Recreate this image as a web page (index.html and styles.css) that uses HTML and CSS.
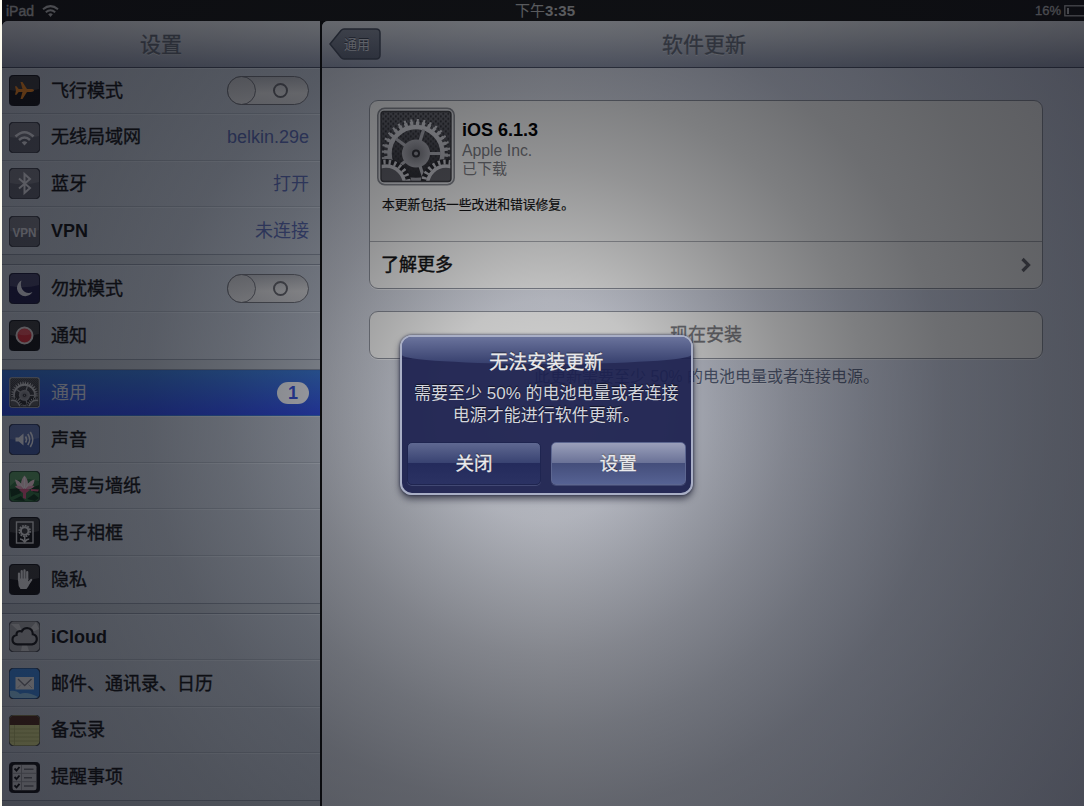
FILE: index.html
```
<!DOCTYPE html>
<html lang="zh-CN">
<head>
<meta charset="utf-8">
<title>设置</title>
<link rel="stylesheet" href="styles.css">
</head>
<body>
<svg class="defs" width="0" height="0">
  <defs>
    <linearGradient id="steel" x1="0" y1="0" x2="0" y2="1"><stop offset="0" stop-color="#d2d2d6"/><stop offset="1" stop-color="#96969c"/></linearGradient>
    <linearGradient id="plate" x1="0" y1="0" x2="0" y2="1"><stop offset="0" stop-color="#66666c"/><stop offset=".5" stop-color="#46464c"/><stop offset="1" stop-color="#28282c"/></linearGradient>
    <radialGradient id="hub"><stop offset="0" stop-color="#707076"/><stop offset="1" stop-color="#a2a2a8"/></radialGradient>
    <pattern id="mesh" width="5" height="5" patternUnits="userSpaceOnUse"><circle cx="1.3" cy="1.3" r="1.1" fill="#2a2a2e"/><circle cx="3.8" cy="3.8" r="1.1" fill="#2a2a2e"/></pattern>
    <clipPath id="gearclip"><rect x="4" y="4" width="70" height="70" rx="3"/></clipPath>
    <symbol id="gears" viewBox="0 0 78 78">
      <rect x=".8" y=".8" width="76.4" height="76.4" rx="7" fill="#d9dadc" stroke="#85878d" stroke-width="1.6"/>
      <rect x="4" y="4" width="70" height="70" rx="3" fill="url(#plate)"/>
      <rect x="4" y="4" width="70" height="70" rx="3" fill="url(#mesh)"/>
      <g clip-path="url(#gearclip)">
        <g fill="none" stroke="#a9a9af">
          <circle cx="39" cy="46" r="26.500" stroke-width="4.500" stroke="url(#steel)"/>
          <circle cx="39" cy="46" r="30" stroke-width="4" pathLength="320" stroke-dasharray="5.600 4.400" stroke="url(#steel)"/>
          <circle cx="39" cy="46" r="33" stroke-width="3" pathLength="320" stroke-dasharray="3.2 6.8" stroke-dashoffset="-1.2" stroke="url(#steel)"/>
          <path d="M39 46H64M39 46l7.700-24M39 46l-20-14.700M39 46l7.700 24M39 46l-20 14.700" stroke-width="3.200"/>
        </g>
        <circle cx="39" cy="46" r="14" fill="url(#hub)"/>
        <circle cx="39" cy="46" r="4" fill="#2b2b30"/><circle cx="39" cy="46" r="2" fill="#8f8f96"/>
        <g fill="none" stroke="#c2c2c7">
          <circle cx="9" cy="77" r="24" fill="#242428" stroke="#242428" stroke-width="3"/>
          <circle cx="9" cy="77" r="18.500" fill="#5c5c62" stroke-width="3.500"/>
          <circle cx="9" cy="77" r="22.500" stroke-width="5" pathLength="240" stroke-dasharray="4 5.230"/>
          <circle cx="69" cy="77" r="24" fill="#242428" stroke="#242428" stroke-width="3"/>
          <circle cx="69" cy="77" r="18.500" fill="#5c5c62" stroke-width="3.500"/>
          <circle cx="69" cy="77" r="22.500" stroke-width="5" pathLength="240" stroke-dasharray="4 5.230"/>
        </g>
      </g>
      <rect x="4" y="4" width="70" height="70" rx="3" fill="none" stroke="#3a3a3e" stroke-width="1.400"/>
    </symbol>
  </defs>
</svg>
<div class="device">
  <div class="status">
    <div class="carrier"><span>iPad</span>
      <svg width="17" height="12" viewBox="0 0 17 12" fill="none" stroke="#c6c6c6" stroke-width="2"><path d="M1 4.200Q8.500-2 16 4.200M3.800 7.300Q8.500 3.300 13.200 7.300"/><path d="M6.200 9.300Q8.500 7.300 10.800 9.300L8.500 12z" fill="#c6c6c6" stroke="none"/></svg>
    </div>
    <div class="clock"><span class="cjk">下午</span>3:35</div>
    <div class="power"><span>16%</span><svg width="20" height="12" viewBox="0 0 20 12"><rect x=".8" y=".8" width="24" height="10" fill="none" stroke="#c0c0c0" stroke-width="1.300"/><rect x="3" y="3" width="2" height="6" fill="#c0c0c0"/></svg></div>
  </div>
  <div class="split">
    <nav class="sidebar">
      <header class="bar"><h1>设置</h1></header>
      <ul class="group">
        <li class="row"><svg class="ico" viewBox="0 0 31 31"><rect class="tile black" width="31" height="31" rx="5"/><path class="gloss" d="M1 5q0-4 4-4h21q4 0 4 4v9q-14 4-29 1z"/><path fill="#f58a22" d="M25 15.500c0-.9-1.500-1.400-3-1.400h-4L13.500 7h-2l2 7.100H9.700L7.500 11.300H6l1 4.200-1 4.200h1.500l2.200-2.800h3.800l-2 7.100h2l4.500-7.100h4c1.500 0 3-.5 3-1.400z"/></svg><span class="label">飞行模式</span><span class="switch"><i class="knob"></i><i class="ring"></i></span></li>
        <li class="row"><svg class="ico" viewBox="0 0 31 31"><rect class="tile gray" width="31" height="31" rx="5"/><path class="gloss" d="M1 5q0-4 4-4h21q4 0 4 4v9q-14 4-29 1z"/><g fill="none" stroke="#e6e6ec" stroke-width="2.600"><path d="M6.500 14.500Q15.500 6 24.500 14.500M10 18Q15.500 13 21 18"/></g><path fill="#e6e6ec" d="M12.700 20.500q2.800-2.300 5.600 0l-2.800 3z"/></svg><span class="label">无线局域网</span><span class="value latin">belkin.29e</span></li>
        <li class="row"><svg class="ico" viewBox="0 0 31 31"><rect class="tile gray" width="31" height="31" rx="5"/><path class="gloss" d="M1 5q0-4 4-4h21q4 0 4 4v9q-14 4-29 1z"/><path fill="none" stroke="#e6e6ec" stroke-width="2" d="M10 10.500l11 9.500-5.500 5V6L21 11l-11 9.500"/></svg><span class="label">蓝牙</span><span class="value">打开</span></li>
        <li class="row"><svg class="ico" viewBox="0 0 31 31"><rect class="tile gray" width="31" height="31" rx="5"/><path class="gloss" d="M1 5q0-4 4-4h21q4 0 4 4v9q-14 4-29 1z"/><text x="15.500" y="20.800" class="vpn" textLength="24" lengthAdjust="spacingAndGlyphs">VPN</text></svg><span class="label latin">VPN</span><span class="value">未连接</span></li>
      </ul>
      <ul class="group">
        <li class="row"><svg class="ico" viewBox="0 0 31 31"><rect class="tile night" width="31" height="31" rx="5"/><path class="gloss" d="M1 5q0-4 4-4h21q4 0 4 4v7q-14 4-29 1z"/><path fill="#e4e4ee" d="M12.500 7.500a8.300 8.300 0 1 0 11 11.500c-7 3.500-13.800-3.500-11-11.500z"/></svg><span class="label">勿扰模式</span><span class="switch"><i class="knob"></i><i class="ring"></i></span></li>
        <li class="row"><svg class="ico" viewBox="0 0 31 31"><rect class="tile black" width="31" height="31" rx="5"/><path class="gloss" d="M1 5q0-4 4-4h21q4 0 4 4v9q-14 4-29 1z"/><circle cx="15.500" cy="15.500" r="8" fill="#e0303c" stroke="#e2dada" stroke-width="2"/><path fill="#f07880" opacity=".5" d="M8.800 14a7 7 0 0 1 13.400 0q-6.700 2.500-13.400 0z"/></svg><span class="label">通知</span></li>
      </ul>
      <ul class="group">
        <li class="row selected"><svg class="ico"><use href="#gears"/></svg><span class="label">通用</span><span class="badge">1</span></li>
        <li class="row"><svg class="ico" viewBox="0 0 31 31"><rect class="tile blue" width="31" height="31" rx="5"/><path class="gloss" d="M1 5q0-4 4-4h21q4 0 4 4v9q-14 4-29 1z"/><path fill="#e8eaf4" d="M6.500 13.500h3.300l4.700-4v12l-4.700-4H6.500z"/><path fill="none" stroke="#e8eaf4" stroke-width="1.600" d="M16.500 12.500q2 3 0 6M18.800 10q3.800 5.500 0 11M21.300 8q5 7.500 0 15"/></svg><span class="label">声音</span></li>
        <li class="row"><svg class="ico" viewBox="0 0 31 31"><rect class="tile leaf" width="31" height="31" rx="5"/><path fill="#5b9a66" d="M1 5q0-4 4-4h21q4 0 4 4v5L20 8 8 9 1 15z"/><path fill="#173d24" d="M1 18l9-1 2 5-10 4zM30 14l-8 3 2 4 6 1zM4 29l8-4 4 5zM18 28l7-5 5 4-4 3z"/><path fill="#f6d6e0" d="M15.500 19C10 19 7 14 6 8.500c3 .5 5 2.500 6 4.500 0-3.500 1.500-6.500 3.500-8.500 2 2 3.500 5 3.500 8.500 1-2 3.500-4 6.500-4.500C25.500 14 21 19 15.500 19z"/><path fill="#eda0bb" d="M15.500 18C11 19 8 18 6 15c4-1 6.500 0 9.500 3 3-3 6.500-4 10-3-2 3-5.500 4-10 3z"/><path fill="#dc5c88" d="M10 19q5-3 11 0l-4 3 0 6-3-1 0-5zM22 18l8 .5-1 2-7-.5z"/><path fill="none" stroke="#fff" stroke-width=".7" d="M15.500 6v11M11 12l4 6M20 12l-4 6"/></svg><span class="label">亮度与墙纸</span></li>
        <li class="row"><svg class="ico" viewBox="0 0 31 31"><rect class="tile black" width="31" height="31" rx="5"/><path class="gloss" d="M1 5q0-4 4-4h21q4 0 4 4v9q-14 4-29 1z"/><rect x="7.500" y="5" width="16.500" height="21" fill="none" stroke="#d8d8da" stroke-width="1.400"/><circle cx="15.700" cy="14" r="3.800" fill="none" stroke="#e2e2e4" stroke-width="2"/><circle cx="15.700" cy="14" r="5.400" fill="none" stroke="#e2e2e4" stroke-width="1.600" pathLength="36" stroke-dasharray="2 1"/><path fill="none" stroke="#e2e2e4" stroke-width="1.600" d="M15.700 19v6.500M11 22q2.500 0 4.700 3 2-3 4.500-3"/></svg><span class="label">电子相框</span></li>
        <li class="row"><svg class="ico" viewBox="0 0 31 31"><rect class="tile black" width="31" height="31" rx="5"/><path class="gloss" d="M1 5q0-4 4-4h21q4 0 4 4v9q-14 4-29 1z"/><path fill="none" stroke="#e4e4e6" stroke-width="2.200" stroke-linecap="round" d="M10 16V9.500M12.700 15V7M15.500 15V6.300M18.200 15.500V8M19 20l3.200-4.200"/><path fill="#e4e4e6" d="M8.900 14.500h10.400v3l3.500-2.300-3.500 7.300-1.800 2.500h-6l-1.800-3z"/></svg><span class="label">隐私</span></li>
      </ul>
      <ul class="group">
        <li class="row"><svg class="ico" viewBox="0 0 31 31"><rect class="tile silver" width="31" height="31" rx="5"/><path fill="#eeeeef" opacity=".6" d="M15 15L2 3h8zM15 15L27 1l3 7zM15 15l-3 15h8z"/><path fill="#b4b4b8" stroke="#202024" stroke-width="2.200" d="M8.500 23.300q-5-.4-5-4.600 0-4 4-4.700-.2-3.600 3.500-4 .9 0 1.600.4Q14.300 7 18.200 7q5.500.4 5.600 6.300 4 1 4 4.800 0 4.600-4.800 5.200z"/></svg><span class="label latin">iCloud</span></li>
        <li class="row"><svg class="ico" viewBox="0 0 31 31"><rect class="tile sky" width="31" height="31" rx="5"/><path fill="#a9dcf5" opacity=".8" d="M1 23q6-1 10 3 7-3 18 3-1 1-4 1H5q-4 0-4-4z"/><rect x="6.500" y="9" width="18.500" height="12.500" fill="#efeff2"/><path fill="none" stroke="#84848e" stroke-width="1.300" d="M9 11l6.700 6.500L22.500 11"/><path fill="none" stroke="#b4b4bc" stroke-width=".9" d="M8.500 20l3.500-3.500M23 20l-3.500-3.500"/></svg><span class="label">邮件、通讯录、日历</span></li>
        <li class="row"><svg class="ico" viewBox="0 0 31 31"><rect class="tile note" width="31" height="31" rx="5"/><path fill="#593426" d="M.7 10V5Q.7.7 5 .7h21q4.300 0 4.300 4.300v5z"/><path stroke="#b4b76c" stroke-width=".8" fill="none" d="M1 14h29M1 18h29M1 22h29M1 26h29M5.500 10v20"/></svg><span class="label">备忘录</span></li>
        <li class="row"><svg class="ico" viewBox="0 0 31 31"><rect class="tile black" width="31" height="31" rx="5"/><rect x="3.500" y="2.800" width="24" height="25.500" rx="2.500" fill="#d4d4d8"/><path stroke="#98989e" stroke-width=".9" fill="none" d="M12.500 3v25M4 11.300h23M4 19.700h23"/><path stroke="#77777d" stroke-width="1.500" d="M15 7.300h9.500M15 15.700h8M15 24h9.500"/><path fill="none" stroke="#1c1c20" stroke-width="1.900" d="M5.500 6.500l2 2L10.500 5M5.500 15l2 2 3-3.500M5.500 23.300l2 2 3-3.500"/></svg><span class="label">提醒事项</span></li>
      </ul>
      <ul class="group tail"></ul>
    </nav>
    <main class="detail">
      <header class="bar">
        <div class="back"><svg width="52" height="32" viewBox="0 0 52 32"><defs><linearGradient id="bk" x1="0" y1="0" x2="0" y2="1"><stop offset="0" stop-color="#868c9a"/><stop offset="1" stop-color="#5e6577"/></linearGradient></defs><path d="M1 16L12 2.500Q13.300 1 15 1h32q4 0 4 4v22q0 4-4 4H15q-1.700 0-3-1.500z" fill="url(#bk)" stroke="#454c5c" stroke-width="1.500"/></svg><span>通用</span></div>
        <h1>软件更新</h1>
      </header>
      <section class="content">
        <div class="card">
          <div class="update">
            <div class="product">
              <svg width="78" height="79"><use href="#gears"/></svg>
              <div class="meta"><b>iOS 6.1.3</b><span class="vendor">Apple Inc.</span><span class="state">已下载</span></div>
            </div>
            <p>本更新包括一些改进和错误修复。</p>
          </div>
          <div class="more"><span>了解更多</span><svg width="10" height="16" viewBox="0 0 10 16"><path d="M1.500 2L7.500 8l-6 6" fill="none" stroke="#66666c" stroke-width="3.200"/></svg></div>
        </div>
        <div class="card install">现在安装</div>
        <p class="footnote">此更新需要至少 50% 的电池电量或者连接电源。</p>
      </section>
    </main>
  </div>
  <div class="dim"></div>
  <div class="alert" role="alertdialog">
    <h2>无法安装更新</h2>
    <p>需要至少 50% 的电池电量或者连接<br>电源才能进行软件更新。</p>
    <div class="actions"><button class="btn">关闭</button><button class="btn primary">设置</button></div>
  </div>
</div>
</body>
</html>
```
FILE: styles.css
```
* { box-sizing: border-box; margin: 0; padding: 0; }
body {
  background: #fdfbef;
  width: 1084px; height: 806px; overflow: hidden;
  font-family: "Liberation Sans", "Noto Sans CJK SC", sans-serif;
  padding-left: 2px;
}
.defs { position: absolute; }
.device { position: relative; width: 1082px; height: 806px; background: #101010; overflow: hidden; display: flex; flex-direction: column; }

.status { flex: none; height: 21px; display: grid; grid-template-columns: 1fr auto 1fr; align-items: center; background: #1a1a1a; color: #c4c4c4; font-size: 14px; font-weight: bold; line-height: 20px; }
.carrier { display: flex; align-items: center; gap: 8px; padding-left: 4px; font-weight: normal; -webkit-text-stroke: .4px #c4c4c4; }
.clock { font-size: 15px; margin-left: 4px; }
.clock .cjk { font-weight: 400; }
.power { display: flex; align-items: center; justify-content: flex-end; gap: 3px; font-size: 13px; font-weight: normal; -webkit-text-stroke: .3px #c4c4c4; }

.split { flex: 1; display: flex; gap: 2px; min-height: 0; }
.sidebar { width: 318px; background: #b9c0cb; border-radius: 6px 0 0 0; overflow: hidden; display: flex; flex-direction: column; }
.detail { flex: 1; border-radius: 6px 0 0 0; overflow: hidden; background: linear-gradient(90deg, #cdd1db, #d8dbe4 30%, #d2d7e6 70%, #c8cede); }

.bar { height: 46.5px; flex: none; display: flex; align-items: center; justify-content: center; position: relative; background: linear-gradient(#e8ebf0 0, #ced2db 35%, #949bb0 100%); border-bottom: 1.5px solid #4c5266; }
.bar h1 { font-size: 21px; line-height: 30px; padding-top: 2px; font-weight: 400; color: #646a77; text-shadow: 0 1px 0 rgba(255,255,255,.5); -webkit-text-stroke: .35px #646a77; }
.detail .bar h1 { padding-left: 2px; }
.back { position: absolute; left: 7px; top: 7px; width: 52px; height: 32px; display: grid; }
.back svg, .back span { grid-area: 1 / 1; }
.back span { padding: 0 10px 0 15px; line-height: 33px; font-size: 13px; color: #d2d5de; text-shadow: 0 -1px 0 #3d4250; }

.group { list-style: none; flex: none; margin-bottom: 10px; border-bottom: 1px solid #8c94a3; background: linear-gradient(90deg, #c6cdd9, #bac1ce); }
.group:first-of-type { margin-bottom: 10.600px; }
.group + .group { border-top: 1px solid #8890a0; margin-top: -1px; }
.row { height: 46.600px; display: flex; align-items: center; padding: 0 11px 0 7px; border-top: 1px solid #cdd4df; border-bottom: 1px solid #a6aebb; }
.group .row:last-child { border-bottom: 0; }
.group.tail { height: 12px; margin: 0; border-top: 0; background: #b4bbc8; }
.ico { width: 31px; height: 31px; flex: none; }
.tile { stroke: rgba(20,22,32,.65); stroke-width: 1.200; }
.black { fill: #1a1a1e; }
.gray { fill: #646672; }
.night { fill: #25224f; }
.blue { fill: #465ea4; }
.leaf { fill: #377747; }
.silver { fill: #aaabaf; }
.sky { fill: #428ce4; }
.note { fill: #dcde8e; }
.gloss { fill: #fff; opacity: .17; }
.vpn { font: bold 13.500px "Liberation Sans", sans-serif; fill: #dcdce2; text-anchor: middle; }
.label { margin-left: 11px; flex: 1; font-size: 18px; line-height: 26px; color: #18181c; white-space: nowrap; -webkit-text-stroke: .4px #18181c; }
.label.latin { font-weight: bold; -webkit-text-stroke: 0; }
.value { font-size: 18px; line-height: 26px; color: #5463a6; }
.selected { background: linear-gradient(#3a78d4, #304ade); border-color: #3a72cc; }
.selected .label { color: #d8dcec; -webkit-text-stroke: 0; }
.badge { width: 32px; height: 22px; border-radius: 11px; background: #eef0f6; color: #3450d8; font-weight: bold; font-size: 18px; line-height: 22px; text-align: center; }
.switch { width: 82px; height: 29px; border-radius: 15px; border: 1.500px solid #6e7079; background: linear-gradient(#b4b6bd, #dcdcde 60%, #d2d2d6); display: flex; align-items: center; justify-content: space-between; padding-right: 20px; }
.knob { width: 29px; height: 29px; margin-left: -1.500px; border-radius: 50%; border: 1.500px solid #6e7079; background: linear-gradient(#bcbdc2, #d8d8db); }
.ring { width: 15px; height: 15px; border-radius: 50%; border: 2.200px solid #66676e; }

.content { padding: 32px 41px 0 47px; }
.card { border: 1.500px solid #8a8e98; border-radius: 9px; background: #f0f0ef; box-shadow: 0 1px 0 rgba(255,255,255,.5); }
.update { height: 141px; padding: 6px 7px; border-bottom: 1px solid #a5a7ac; }
.product { display: flex; gap: 7px; }
.meta { display: flex; flex-direction: column; padding-top: 13px; }
.meta b { font-size: 18px; line-height: 21px; color: #000; }
.meta .vendor { font-size: 15.800px; line-height: 19px; color: #77777b; }
.meta .state { font-size: 15px; line-height: 17px; color: #77777b; }
.update p { font-size: 12.800px; line-height: 20px; margin: 9px 0 0 5px; color: #111; -webkit-text-stroke: .2px #111; }
.more { height: 46px; padding: 0 11px 0 11px; display: flex; align-items: center; justify-content: space-between; font-size: 18px; color: #111; -webkit-text-stroke: .45px #111; }
.more span { line-height: 26px; padding-top: 1px; }
.install { margin-top: 22.500px; height: 48px; line-height: 47px; font-size: 18px; text-align: center; color: #77777b; -webkit-text-stroke: .3px #77777b; }
.footnote { margin-top: 7px; padding-left: 1px; text-align: center; font-size: 16px; line-height: 22px; color: #566079; text-shadow: 0 1px 0 rgba(255,255,255,.3); }

.dim { position: absolute; inset: 0; background: radial-gradient(circle at 544px 410px, rgba(6,6,8,.12) 0, rgba(6,6,9,.19) 110px, rgba(6,7,10,.3) 180px, rgba(6,7,11,.4) 245px, rgba(6,8,13,.49) 320px, rgba(6,8,14,.56) 400px, rgba(6,8,14,.605) 500px, rgba(6,7,15,.66) 680px); }

.alert {
  position: absolute; z-index: 1; left: 398px; top: 335px; width: 292.500px; height: 160px;
  border: 2.500px solid #a9afc6; border-radius: 12px;
  background: rgba(27,31,78,.92);
  box-shadow: 0 4px 7px rgba(10,12,30,.6), 0 0 2px 1px rgba(60,66,96,.5);
  padding: 12px 5px 0; text-align: center; color: #eaeaec; text-shadow: 0 -1px 1px rgba(0,0,0,.6);
}
.alert::before { content: ""; position: absolute; z-index: -1; left: 0; right: 0; top: 0; height: 27px; border-radius: 9px 9px 50% 50% / 9px 9px 9px 9px; background: linear-gradient(#6a739c, #363f6d); }
.alert h2 { font-size: 19px; line-height: 28px; font-weight: 400; -webkit-text-stroke: .3px #eaeaec; }
.alert p { font-size: 17px; line-height: 21.500px; margin-top: 6px; white-space: nowrap; color: #d2d4dc; }
.actions { display: flex; gap: 10px; margin-top: 16px; }
.btn { flex: 1; height: 43px; padding-bottom: 3px; border: 1px solid #1f2550; border-radius: 5px; background: linear-gradient(#5f6891 0, #394372 48%, #242b5c 50%, #2b3263 100%); font: 18.500px "Liberation Sans", "Noto Sans CJK SC", sans-serif; color: #eaeaec; text-shadow: inherit; -webkit-text-stroke: .3px #eaeaec; box-shadow: 0 1px 0 rgba(110,120,160,.4); }
.primary { border-color: #5c6690; background: linear-gradient(#9a9fba 0, #6a7297 48%, #444e7b 50%, #566293 100%); }
```
